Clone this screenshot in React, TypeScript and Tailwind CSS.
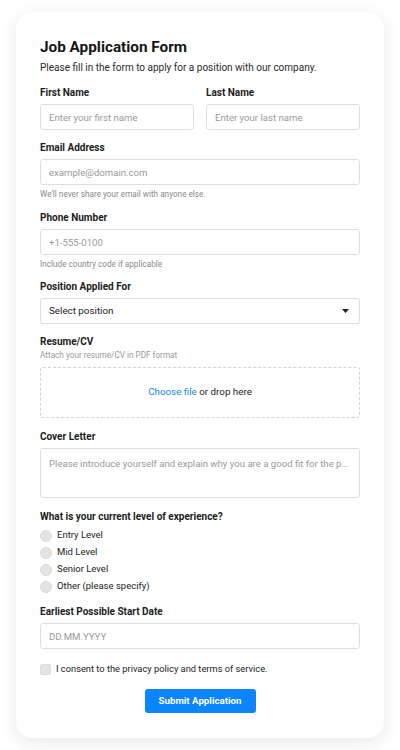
import { useState } from "react";

const experienceLevels = ["Entry Level", "Mid Level", "Senior Level", "Other (please specify)"];

function Label({ children, className = "" }: { children: React.ReactNode; className?: string }) {
  return (
    <label className={"block h-4 leading-4 text-[10px] font-bold text-[#1c1c1c] " + className}>
      {children}
    </label>
  );
}

function TextInput({ placeholder }: { placeholder: string }) {
  return (
    <input
      type="text"
      placeholder={placeholder}
      className="mt-[3px] block h-[26px] w-full rounded-[3px] border border-[#dedede] bg-white px-2 text-[9.6px] text-[#222] placeholder:text-[#9a9a9a] outline-none"
    />
  );
}

export default function App() {
  const [level, setLevel] = useState("");
  const [consent, setConsent] = useState(false);

  return (
    <div className="min-h-[750px] bg-white px-4 pt-3 font-['Roboto',sans-serif]">
      <form
        onSubmit={(e) => e.preventDefault()}
        className="rounded-[16px] bg-white px-6 pt-6 pb-[25px] shadow-[0_4px_18px_rgba(0,0,0,0.09)]"
      >
        <h1 className="h-[22px] text-[15.3px] leading-[22px] font-bold text-[#151515]">
          Job Application Form
        </h1>
        <p className="h-5 text-[10px] leading-5 text-[#2a2a2a]">
          Please fill in the form to apply for a position with our company.
        </p>

        <div className="mt-[7px] grid grid-cols-2 gap-3">
          <div>
            <Label>First Name</Label>
            <TextInput placeholder="Enter your first name" />
          </div>
          <div>
            <Label>Last Name</Label>
            <TextInput placeholder="Enter your last name" />
          </div>
        </div>

        <div className="mt-[10px]">
          <Label>Email Address</Label>
          <TextInput placeholder="example@domain.com" />
          <p className="mt-[2px] h-[14px] text-[8.2px] leading-[14px] text-[#8a8a8a]">
            We'll never share your email with anyone else.
          </p>
        </div>

        <div className="mt-[9px]">
          <Label>Phone Number</Label>
          <TextInput placeholder="+1-555-0100" />
          <p className="mt-[2px] h-[14px] text-[8.2px] leading-[14px] text-[#8a8a8a]">
            Include country code if applicable
          </p>
        </div>

        <div className="mt-[8px]">
          <Label>Position Applied For</Label>
          <div className="relative mt-[3px] flex h-[26px] items-center rounded-[3px] border border-[#dedede] bg-white px-2 text-[9.8px] text-[#222]">
            <span className="flex-1">Select position</span>
            <svg width="7" height="4" viewBox="0 0 7 4" className="mr-[2px]">
              <path d="M0 0h7L3.5 4z" fill="#222" />
            </svg>
          </div>
        </div>

        <div className="mt-[11px]">
          <label className="block h-[14px] text-[10px] leading-[14px] font-bold text-[#1c1c1c]">
            Resume/CV
          </label>
          <p className="h-3 text-[8.2px] leading-3 text-[#9a9a9a]">Attach your resume/CV in PDF format</p>
          <div className="mt-[6px] flex h-[51px] items-center justify-center rounded-[3px] border border-dashed border-[#d4d4d4] text-[9.8px] text-[#222]">
            <span className="text-[#1a86f5]">Choose file</span>
            <span>&nbsp;or drop here</span>
          </div>
        </div>

        <div className="mt-[11px]">
          <Label>Cover Letter</Label>
          <div className="mt-[3px] h-[50px] rounded-[3px] border border-[#dedede] bg-white pl-2 pr-[10px] pt-[8px] text-[9.6px] leading-[14px] text-[#9a9a9a]">
            <div className="truncate">
              Please introduce yourself and explain why you are a good fit for the position.
            </div>
          </div>
        </div>

        <div className="mt-[11px]">
          <Label>What is your current level of experience?</Label>
          <div className="mt-[2px]">
            {experienceLevels.map((l) => (
              <label key={l} className="flex h-[17px] items-center gap-[5px] text-[9.5px] text-[#222]">
                <input
                  type="radio"
                  name="level"
                  checked={level === l}
                  onChange={() => setLevel(l)}
                  className="h-3 w-3 appearance-none rounded-full border border-[#dcdcdc] bg-[#e4e4e4]"
                />
                {l}
              </label>
            ))}
          </div>
        </div>

        <div className="mt-[9px]">
          <Label>Earliest Possible Start Date</Label>
          <TextInput placeholder="DD.MM.YYYY" />
        </div>

        <label className="mt-3 flex h-4 items-center gap-[5px] text-[9.3px] text-[#222]">
          <input
            type="checkbox"
            checked={consent}
            onChange={(e) => setConsent(e.target.checked)}
            className="h-[11px] w-[11px] appearance-none rounded-[2px] border border-[#dcdcdc] bg-[#e4e4e4]"
          />
          I consent to the privacy policy and terms of service.
        </label>

        <div className="mt-3 flex justify-center">
          <button
            type="submit"
            className="h-6 w-[111px] rounded-[3px] bg-[#0a84ff] text-[9.7px] font-bold text-white"
          >
            Submit Application
          </button>
        </div>
      </form>
    </div>
  );
}
